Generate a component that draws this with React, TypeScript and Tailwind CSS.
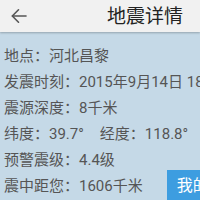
import React from "react";

export default function App() {
  const font = { fontFamily: 'Roboto, "Noto Sans CJK SC", sans-serif' };
  return (
    <div className="w-[200px] h-[200px] overflow-hidden bg-[#c5d9e7] flex flex-col" style={font}>
      <div className="h-[32px] shrink-0 bg-[#f1f1f1] flex items-center justify-between pl-[10px] pr-[17px] shadow-[0_1px_2px_rgba(0,0,0,0.25)] relative z-10">
        <svg width="18" height="18" viewBox="0 0 18 18" fill="none" stroke="#555" strokeWidth="1.6" strokeLinecap="round" strokeLinejoin="round">
          <path d="M16 9H2.5" />
          <path d="M8.5 2.8L2.3 9l6.2 6.2" />
        </svg>
        <span className="text-[19px] leading-none text-[#222]">地震详情</span>
      </div>
      <div className="flex flex-col pt-[11px] pl-[4px] text-[15px] leading-[26px] text-[#555] whitespace-nowrap">
        <div className="h-[26px]">地点：河北昌黎</div>
        <div className="h-[26px]">发震时刻：2015年9月14日 18:05</div>
        <div className="h-[26px]">震源深度：8千米</div>
        <div className="h-[26px] flex">
          <span>纬度：39.7°</span>
          <span className="ml-[16px]">经度：118.8°</span>
        </div>
        <div className="h-[26px]">预警震级：4.4级</div>
        <div className="h-[26px] flex items-start">
          <span>震中距您：1606千米</span>
          <div className="ml-[24px] -mt-[3px] shrink-0 h-[32px] bg-[#3d9de0] text-white text-[16px] flex items-center px-[10px]">
            我的位置
          </div>
        </div>
      </div>
    </div>
  );
}
